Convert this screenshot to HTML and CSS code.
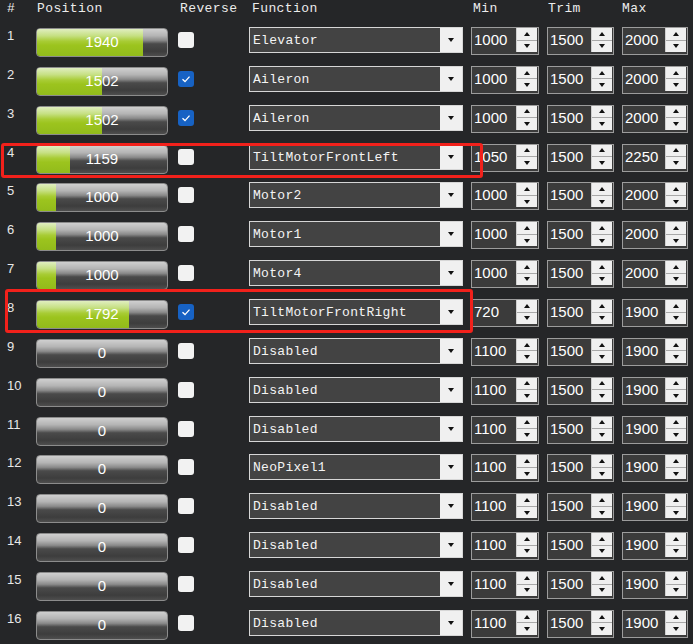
FILE: index.html
```html
<!DOCTYPE html>
<html lang="en">
<head>
    <meta charset="UTF-8">
    <meta name="viewport" content="width=device-width, initial-scale=1.0">
    <title>Servo Output</title>
    <link rel="stylesheet" href="styles.css">
</head>
<body>
    <div class="servo-table">
        <div class="servo-head">
            <span class="h-num">#</span>
            <span class="h-pos">Position</span>
            <span class="h-rev">Reverse</span>
            <span class="h-func">Function</span>
            <span class="h-min">Min</span>
            <span class="h-trim">Trim</span>
            <span class="h-max">Max</span>
        </div>
        <div id="servoRows"></div>

        <div class="mark mark-4"></div>
        <div class="mark mark-8"></div>
    </div>

    <script>
        const servos = [
            { pos: 1940, rev: false, func: "Elevator", min: 1000, trim: 1500, max: 2000 },
            { pos: 1502, rev: true, func: "Aileron", min: 1000, trim: 1500, max: 2000 },
            { pos: 1502, rev: true, func: "Aileron", min: 1000, trim: 1500, max: 2000 },
            { pos: 1159, rev: false, func: "TiltMotorFrontLeft", min: 1050, trim: 1500, max: 2250 },
            { pos: 1000, rev: false, func: "Motor2", min: 1000, trim: 1500, max: 2000 },
            { pos: 1000, rev: false, func: "Motor1", min: 1000, trim: 1500, max: 2000 },
            { pos: 1000, rev: false, func: "Motor4", min: 1000, trim: 1500, max: 2000 },
            { pos: 1792, rev: true, func: "TiltMotorFrontRight", min: 720, trim: 1500, max: 1900 },
            { pos: 0, rev: false, func: "Disabled", min: 1100, trim: 1500, max: 1900 },
            { pos: 0, rev: false, func: "Disabled", min: 1100, trim: 1500, max: 1900 },
            { pos: 0, rev: false, func: "Disabled", min: 1100, trim: 1500, max: 1900 },
            { pos: 0, rev: false, func: "NeoPixel1", min: 1100, trim: 1500, max: 1900 },
            { pos: 0, rev: false, func: "Disabled", min: 1100, trim: 1500, max: 1900 },
            { pos: 0, rev: false, func: "Disabled", min: 1100, trim: 1500, max: 1900 },
            { pos: 0, rev: false, func: "Disabled", min: 1100, trim: 1500, max: 1900 },
            { pos: 0, rev: false, func: "Disabled", min: 1100, trim: 1500, max: 1900 },
        ];

        // bar shows 800..2200
        function fillPercent(value) {
            const pct = (value - 800) / 1400 * 100;
            return Math.max(0, Math.min(100, pct)).toFixed(2);
        }

        function spinBox(value) {
            return `
                <div class="spin">
                    <span class="spin-val">${value}</span>
                    <span class="spin-btns">
                        <span class="spin-up"><i class="arrow-up"></i></span>
                        <span class="spin-down"><i class="arrow-down"></i></span>
                    </span>
                </div>`;
        }

        function displayServos() {
            const rows = document.getElementById("servoRows");
            rows.innerHTML = "";

            servos.forEach((s, i) => {
                const check = s.rev
                    ? `<span class="check checked"><svg width="16" height="16" viewBox="0 0 16 16"><path d="M4.5 8.3 L7 10.6 L11.5 5.6" fill="none" stroke="#fff" stroke-width="1.3"/></svg></span>`
                    : `<span class="check"></span>`;

                rows.innerHTML += `
                    <div class="servo-row">
                        <span class="num">${i + 1}</span>
                        <div class="bar">
                            <div class="fill" style="width: ${fillPercent(s.pos)}%"></div>
                            <span class="bar-value">${s.pos}</span>
                        </div>
                        <div>${check}</div>
                        <div class="select">
                            <span class="select-text">${s.func}</span>
                            <span class="select-btn"><i class="arrow-down"></i></span>
                        </div>
                        ${spinBox(s.min)}
                        ${spinBox(s.trim)}
                        ${spinBox(s.max)}
                    </div>`;
            });
        }

        displayServos();
    </script>
</body>
</html>
```

FILE: styles.css
```css
* {
    margin: 0;
    padding: 0;
    box-sizing: border-box;
}

body {
    background-color: #252628;
    color: #fff;
    font-family: "Liberation Mono", monospace;
    width: 693px;
    height: 644px;
    overflow: hidden;
}

.servo-table {
    position: relative;
}

.servo-head,
.servo-row {
    display: grid;
    grid-template-columns: 36px 142px 71px 222px 76px 75px 71px;
    align-items: start;
}

.servo-head {
    height: 26px;
    font-size: 13px;
    line-height: 14px;
    letter-spacing: 0.4px;
    color: #ececec;
    padding-top: 2px;
}

.h-num { padding-left: 7px; }
.h-pos { padding-left: 1px; }
.h-rev { padding-left: 2px; }
.h-func { padding-left: 3px; }
.h-min { padding-left: 2px; }
.h-trim { padding-left: 1px; }

.servo-row {
    height: 38.87px;
}

.num {
    padding: 3px 0 0 7px;
    font-family: "Liberation Sans", Arial, sans-serif;
    font-size: 13px;
    line-height: 14px;
    color: #e8e8e8;
}

.bar {
    margin-top: 2px;
    width: 132px;
    height: 29px;
    border: 1px solid #8c8c8c;
    border-radius: 4px;
    overflow: hidden;
    display: grid;
    background: linear-gradient(#cfcfcf 0%, #b4b4b4 25%, #8a8a8a 42%, #4a4a4a 55%, #3d3d3d 82%, #4e4e4e 100%);
}

.fill,
.bar-value {
    grid-area: 1 / 1;
}

.fill {
    height: 100%;
    background: linear-gradient(#e0eec0 0%, #c6e083 25%, #a8cc35 45%, #9cc41e 60%, #92bb1b 100%);
}

.bar-value {
    text-align: center;
    font-family: "Liberation Sans", Arial, sans-serif;
    font-size: 15px;
    line-height: 26px;
    color: #fff;
}

.check {
    display: block;
    margin-top: 6px;
    width: 16px;
    height: 16px;
    border-radius: 3px;
    background: #f2f2f2;
}

.check.checked {
    background: #1762c4;
}

.check svg {
    display: block;
}

.select {
    margin-top: 1px;
    width: 214px;
    height: 26px;
    border: 1px solid #d6d6d6;
    background: #434343;
    display: flex;
}

.select-text {
    flex: 1;
    padding: 2px 0 0 3px;
    font-size: 13px;
    line-height: 22px;
    letter-spacing: 0.3px;
    color: #f4f4f4;
}

.select-btn {
    width: 22px;
    background: #f0f0f0;
    display: flex;
    align-items: center;
    justify-content: center;
}

.arrow-down,
.arrow-up {
    display: block;
    width: 0;
    height: 0;
    border-left: 3px solid transparent;
    border-right: 3px solid transparent;
}

.arrow-down {
    border-top: 4px solid #111;
}

.arrow-up {
    border-bottom: 4px solid #111;
}

.spin {
    margin-top: 1px;
    width: calc(100% - 8px);
    height: 28px;
    border: 1px solid #9c9c9c;
    background: #3b3b3b;
    display: flex;
}

.spin:last-child {
    width: 66px;
}

.spin-val {
    flex: 1;
    padding-left: 2px;
    font-family: "Liberation Sans", Arial, sans-serif;
    font-size: 15px;
    line-height: 23px;
    color: #fff;
}

.spin-btns {
    width: 21px;
    margin: 0 1px 2px 0;
    background: #f0f0f0;
    border-left: 1px solid #cfcfcf;
    display: flex;
    flex-direction: column;
}

.spin-up,
.spin-down {
    flex: 1;
    display: flex;
    align-items: center;
    justify-content: center;
}

.spin-down {
    border-top: 1px solid #a8a8a8;
}

.mark {
    position: absolute;
    border: 3px solid #f2211b;
    border-radius: 3px;
}

.mark-4 {
    left: 1px;
    top: 143px;
    width: 482px;
    height: 35px;
}

.mark-8 {
    left: 5px;
    top: 289px;
    width: 468px;
    height: 44px;
}
```
